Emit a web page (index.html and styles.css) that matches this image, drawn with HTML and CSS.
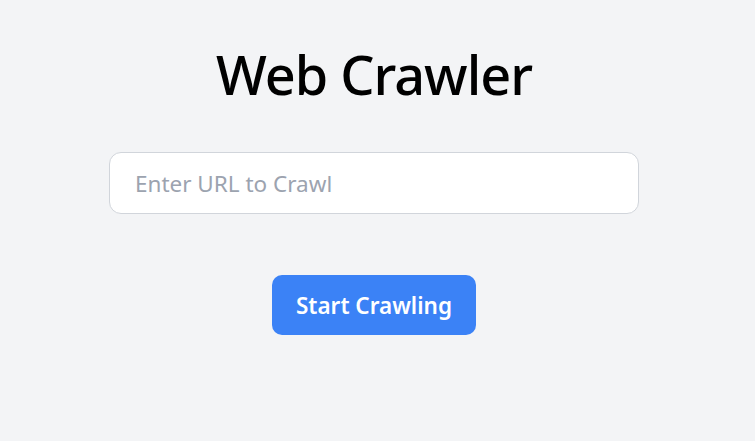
FILE: index.html
```html
<!DOCTYPE html>
<html lang="en">
<head>
<meta charset="utf-8">
<title>Web Crawler</title>
<link rel="stylesheet" href="styles.css">
</head>
<body>
<main class="page">
  <h1 class="title">Web Crawler</h1>
  <input class="url-input" type="text" placeholder="Enter URL to Crawl">
  <button class="start-btn" type="button">Start Crawling</button>
</main>
</body>
</html>
```

FILE: styles.css
```css
html, body {
  margin: 0;
  padding: 0;
  background: #f3f4f6;
  font-family: "Noto Sans", "Open Sans", sans-serif;
}
.page {
  display: flex;
  flex-direction: column;
  align-items: center;
  padding-top: 47px;
  padding-right: 7px;
}
.title {
  margin: 0;
  font-size: 54px;
  line-height: 54px;
  font-weight: 500;
  letter-spacing: -1px;
  color: #000;
}
.url-input {
  box-sizing: border-box;
  margin-top: 51px;
  width: 530px;
  height: 62px;
  padding: 0 24px 0 25px;
  border: 1px solid #d1d5db;
  border-radius: 12px;
  background: #fff;
  font-family: inherit;
  font-size: 22.5px;
  color: #111827;
  outline: none;
}
.url-input::placeholder {
  color: #9ca3af;
}
.start-btn {
  box-sizing: border-box;
  margin-top: 61px;
  width: 204px;
  height: 60px;
  border: none;
  border-radius: 10px;
  background: #3b82f6;
  color: #fff;
  font-family: inherit;
  font-size: 22.5px;
  font-weight: 600;
  cursor: pointer;
}
```
